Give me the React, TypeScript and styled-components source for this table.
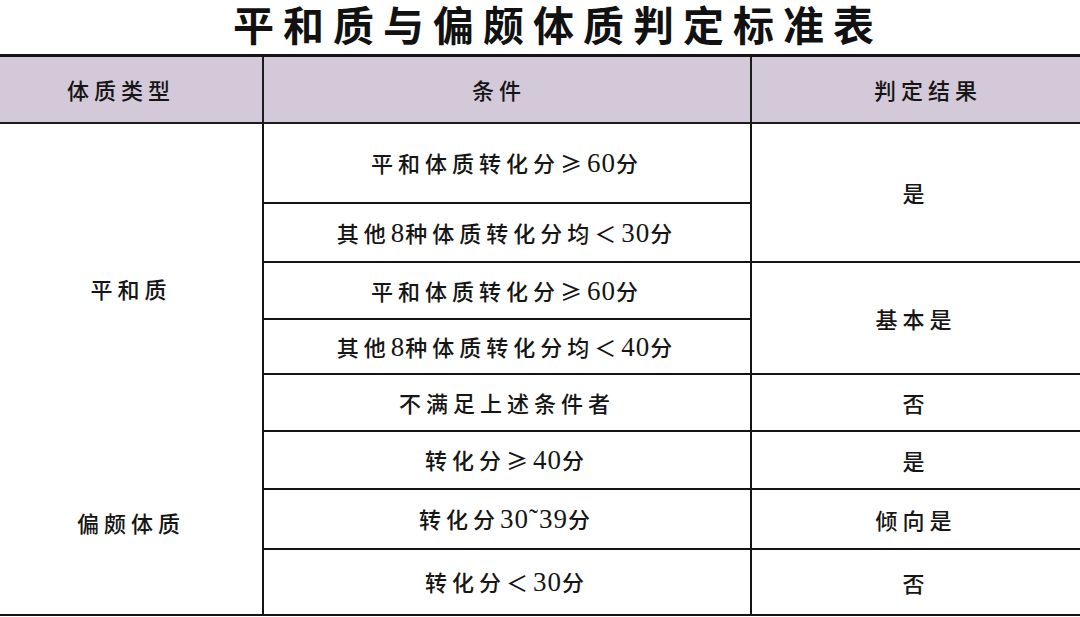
import styled, { createGlobalStyle } from 'styled-components';

const GlobalStyle = createGlobalStyle`
	html, body {
		margin: 0;
		padding: 0;
		background: #fff;
	}
	body {
		font-family: "Liberation Serif", "Noto Sans CJK SC", serif;
		color: #161616;
	}
`;

const Page = styled.div`
	width: 1080px;
	height: 617px;
	overflow: hidden;
	display: flex;
	flex-direction: column;
`;
const Title = styled.h1`
	box-sizing: border-box;
	margin: 0;
	height: 54px;
	flex: none;
	display: flex;
	align-items: center;
	justify-content: center;
	padding: 0 0 8px 36px;
	font-family: "Noto Sans CJK SC", sans-serif;
	font-size: 41px;
	font-weight: 700;
	letter-spacing: 9px;
	line-height: 46px;
	color: #111;
`;
const Table = styled.table`
	width: 1080px;
	table-layout: fixed;
	border-collapse: collapse;
	border-top: 3px solid #141414;
	border-bottom: 2px solid #141414;
	border-left: hidden;
	border-right: hidden;
`;
const Row = styled.tr<{ $h: number }>`
	height: ${(p) => p.$h}px;
`;
const HeadCell = styled.th<{ $dx?: number }>`
	background: #d3c9d9;
	border: 2px solid #1c1c1c;
	padding: 0 ${(p) => (p.$dx && p.$dx < 0 ? -p.$dx * 2 : 0)}px 0 ${(p) => (p.$dx && p.$dx > 0 ? p.$dx * 2 : 0)}px;
	font-family: "Noto Sans CJK SC", sans-serif;
	font-size: 22px;
	font-weight: 500;
	letter-spacing: 5px;
	text-align: center;
	vertical-align: middle;
`;
const Cell = styled.td`
	border: 2px solid #141414;
	padding: 0;
	font-size: 22px;
	font-weight: 500;
	letter-spacing: 5px;
	text-align: center;
	vertical-align: middle;
	white-space: nowrap;
	font-family: "Noto Sans CJK SC", sans-serif;
`;
const GroupCell = styled(Cell)<{ $shift?: number }>`
	border-top: none;
	border-bottom: none;
	padding-top: ${(p) => p.$shift || 0}px;
`;
const Num = styled.span`
	font-family: "Liberation Serif", serif;
	font-size: 27px;
	font-weight: 400;
	letter-spacing: 1px;
`;

const Text = ({ children }: { children: string }) => {
	const parts = children.split(/([0-9˜]+)/);
	return (
		<>
			{parts.map((s, i) => (i % 2 ? <Num key={i}>{s}</Num> : s))}
		</>
	);
};

export default function App() {
	return (
		<Page>
			<GlobalStyle />
			<Title>平和质与偏颇体质判定标准表</Title>
			<Table>
				<colgroup>
					<col style={{ width: 263 }} />
					<col style={{ width: 488 }} />
					<col style={{ width: 329 }} />
				</colgroup>
				<thead>
					<Row $h={67}>
						<HeadCell $dx={-10}>体质类型</HeadCell>
						<HeadCell $dx={-8}>条件</HeadCell>
						<HeadCell $dx={12}>判定结果</HeadCell>
					</Row>
				</thead>
				<tbody>
					<Row $h={80}>
						<GroupCell rowSpan={5} $shift={22}>平和质</GroupCell>
						<Cell><Text>平和体质转化分≥60分</Text></Cell>
						<Cell rowSpan={2}>是</Cell>
					</Row>
					<Row $h={59}>
						<Cell><Text>其他8种体质转化分均＜30分</Text></Cell>
					</Row>
					<Row $h={57}>
						<Cell><Text>平和体质转化分≥60分</Text></Cell>
						<Cell rowSpan={2}>基本是</Cell>
					</Row>
					<Row $h={55}>
						<Cell><Text>其他8种体质转化分均＜40分</Text></Cell>
					</Row>
					<Row $h={57}>
						<Cell>不满足上述条件者</Cell>
						<Cell>否</Cell>
					</Row>
					<Row $h={58}>
						<GroupCell rowSpan={4}>偏颇体质</GroupCell>
						<Cell><Text>转化分≥40分</Text></Cell>
						<Cell>是</Cell>
					</Row>
					<Row $h={60}>
						<Cell><Text>转化分30˜39分</Text></Cell>
						<Cell>倾向是</Cell>
					</Row>
					<Row $h={66}>
						<Cell><Text>转化分＜30分</Text></Cell>
						<Cell>否</Cell>
					</Row>
				</tbody>
			</Table>
		</Page>
	);
}
